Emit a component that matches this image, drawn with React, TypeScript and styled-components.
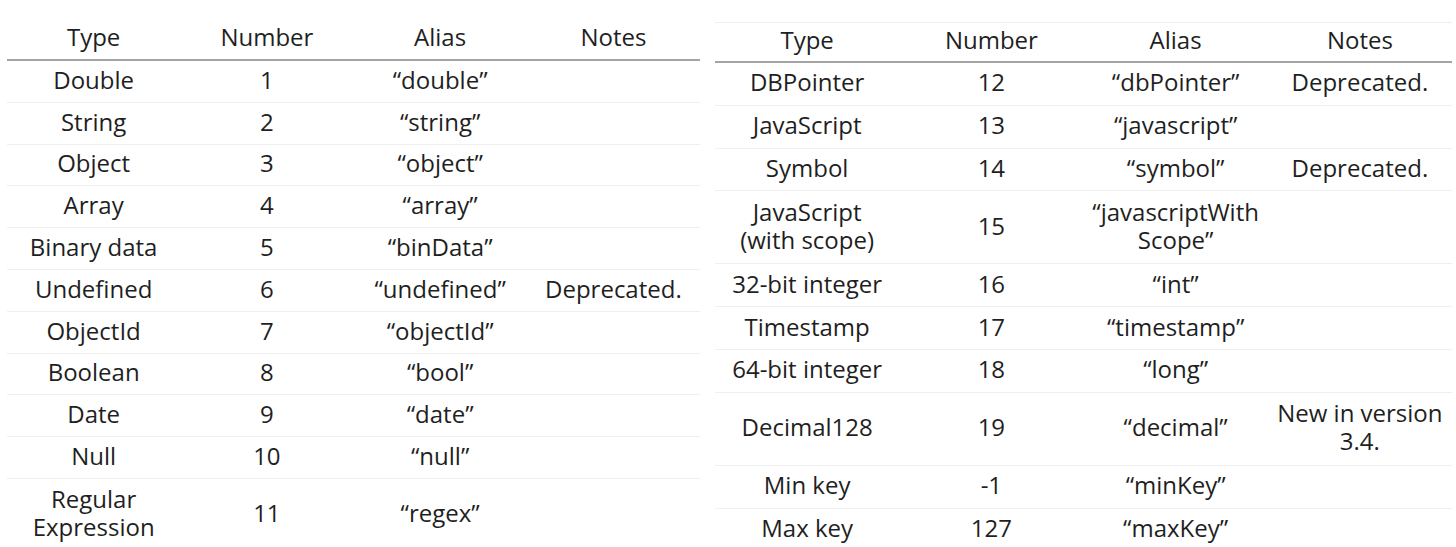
import React from "react";
import styled, { createGlobalStyle } from "styled-components";

const Global = createGlobalStyle`
  html, body {
    margin: 0;
    padding: 0;
    background: #ffffff;
    overflow: hidden;
  }
  body {
    font-family: "Open Sans", "Noto Sans", "Liberation Sans", sans-serif;
    color: #1f1f1f;
  }
`;

const Page = styled.div`
  display: flex;
  align-items: flex-start;
  gap: 15px;
  padding-left: 7px;
  width: 1456px;
  height: 547px;
  box-sizing: border-box;
  overflow: hidden;
`;

const Table = styled.div<{ $width: number; $top: number; $topLine: boolean }>`
  width: ${(p) => p.$width}px;
  margin-top: ${(p) => p.$top}px;
  border-top: ${(p) => (p.$topLine ? "1px solid #eeeeee" : "none")};
  display: flex;
  flex-direction: column;
  flex-shrink: 0;
`;

const HeadRow = styled.div<{ $height: number; $padTop: number; $padBottom: number }>`
  display: grid;
  grid-template-columns: repeat(4, 1fr);
  height: ${(p) => p.$height}px;
  padding-top: ${(p) => p.$padTop}px;
  padding-bottom: ${(p) => p.$padBottom}px;
  border-bottom: 2px solid #a4a4a4;
  box-sizing: content-box;
`;

const Row = styled.div<{ $height: number }>`
  display: grid;
  grid-template-columns: repeat(4, 1fr);
  height: ${(p) => p.$height}px;
  border-bottom: 1px solid #efefef;
  padding-bottom: 3px;
  box-sizing: border-box;
  flex-shrink: 0;
`;

const Cell = styled.div`
  display: flex;
  align-items: center;
  justify-content: center;
  text-align: center;
  font-size: 24px;
  line-height: 28px;
  white-space: nowrap;
`;

type Entry = [React.ReactNode, string, React.ReactNode, React.ReactNode?, boolean?];

const leftRows: Entry[] = [
  ["Double", "1", "“double”"],
  ["String", "2", "“string”"],
  ["Object", "3", "“object”"],
  ["Array", "4", "“array”"],
  ["Binary data", "5", "“binData”"],
  ["Undefined", "6", "“undefined”", "Deprecated."],
  ["ObjectId", "7", "“objectId”"],
  ["Boolean", "8", "“bool”"],
  ["Date", "9", "“date”"],
  ["Null", "10", "“null”"],
  [
    <>
      Regular
      <br />
      Expression
    </>,
    "11",
    "“regex”",
    undefined,
    true,
  ],
];

const rightRows: Entry[] = [
  ["DBPointer", "12", "“dbPointer”", "Deprecated."],
  ["JavaScript", "13", "“javascript”"],
  ["Symbol", "14", "“symbol”", "Deprecated."],
  [
    <>
      JavaScript
      <br />
      (with scope)
    </>,
    "15",
    <>
      “javascriptWith
      <br />
      Scope”
    </>,
    undefined,
    true,
  ],
  ["32-bit integer", "16", "“int”"],
  ["Timestamp", "17", "“timestamp”"],
  ["64-bit integer", "18", "“long”"],
  [
    "Decimal128",
    "19",
    "“decimal”",
    <>
      New in version
      <br />
      3.4.
    </>,
    true,
  ],
  ["Min key", "-1", "“minKey”"],
  ["Max key", "127", "“maxKey”"],
];

const headers = ["Type", "Number", "Alias", "Notes"];

function DataTable(props: {
  rows: Entry[];
  width: number;
  top: number;
  topLine: boolean;
  headHeight: number;
  headPadTop: number;
  headPadBottom: number;
  rowHeight: number;
  tallHeight: number;
}) {
  return (
    <Table $width={props.width} $top={props.top} $topLine={props.topLine}>
      <HeadRow
        $height={props.headHeight}
        $padTop={props.headPadTop}
        $padBottom={props.headPadBottom}
      >
        {headers.map((h) => (
          <Cell key={h}>{h}</Cell>
        ))}
      </HeadRow>
      {props.rows.map((r, i) => (
        <Row key={i} $height={r[4] ? props.tallHeight : props.rowHeight}>
          <Cell>{r[0]}</Cell>
          <Cell>{r[1]}</Cell>
          <Cell>{r[2]}</Cell>
          <Cell>{r[3] ?? ""}</Cell>
        </Row>
      ))}
    </Table>
  );
}

export default function App() {
  return (
    <>
      <Global />
      <Page>
        <DataTable
          rows={leftRows}
          width={693}
          top={0}
          topLine={false}
          headHeight={42}
          headPadTop={16}
          headPadBottom={1}
          rowHeight={41.8}
          tallHeight={72}
        />
        <DataTable
          rows={rightRows}
          width={737}
          top={22}
          topLine={true}
          headHeight={33}
          headPadTop={0}
          headPadBottom={5}
          rowHeight={42.8}
          tallHeight={73}
        />
      </Page>
    </>
  );
}
